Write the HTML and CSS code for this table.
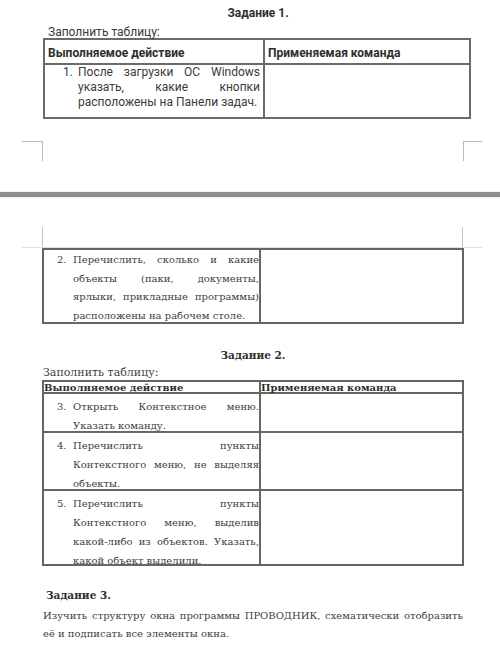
FILE: index.html
```html
<!DOCTYPE html>
<html lang="ru">
<head>
<meta charset="utf-8">
<title>Задания</title>
<link rel="stylesheet" href="styles.css">
</head>
<body>
<section class="sheet top">
  <h2 class="t1-title">Задание 1.</h2>
  <p class="t1-label">Заполнить таблицу:</p>
  <div class="g1">
    <div class="cell head c-l">Выполняемое действие</div>
    <div class="cell head">Применяемая команда</div>
    <div class="cell c-l body1">
      <div class="item item1">
        <span class="num">1.</span>
        <div class="text">
          <span class="ln j">После загрузки ОС Windows</span>
          <span class="ln j">указать, какие кнопки</span>
          <span class="ln">расположены на Панели задач.</span>
        </div>
      </div>
    </div>
    <div class="cell"></div>
  </div>
  <div class="marks"><span class="mark mark-l"></span><span class="mark mark-r"></span></div>
</section>

<div class="divider"></div>

<section class="sheet bottom">
  <div class="marks2"><div class="marks2-in"></div></div>
  <div class="g2">
    <div class="cell c-l row2">
      <div class="item">
        <span class="num">2.</span>
        <div class="text">
          <span class="ln j">Перечислить, сколько и какие</span>
          <span class="ln j">объекты (паки, документы,</span>
          <span class="ln j">ярлыки, прикладные программы)</span>
          <span class="ln">расположены на рабочем столе.</span>
        </div>
      </div>
    </div>
    <div class="cell"></div>
  </div>

  <h2 class="t2-title">Задание 2.</h2>
  <p class="t2-label">Заполнить таблицу:</p>
  <div class="g3">
    <div class="cell c-l rb head3">Выполняемое действие</div>
    <div class="cell rb head3">Применяемая команда</div>

    <div class="cell c-l rb row">
      <div class="item">
        <span class="num">3.</span>
        <div class="text">
          <span class="ln j">Открыть Контекстное меню.</span>
          <span class="ln">Указать команду.</span>
        </div>
      </div>
    </div>
    <div class="cell rb"></div>

    <div class="cell c-l rb row">
      <div class="item">
        <span class="num">4.</span>
        <div class="text">
          <span class="ln j">Перечислить пункты</span>
          <span class="ln j">Контекстного меню, не выделяя</span>
          <span class="ln">объекты.</span>
        </div>
      </div>
    </div>
    <div class="cell rb"></div>

    <div class="cell c-l row">
      <div class="item">
        <span class="num">5.</span>
        <div class="text">
          <span class="ln j">Перечислить пункты</span>
          <span class="ln j">Контекстного меню, выделив</span>
          <span class="ln j">какой-либо из объектов. Указать,</span>
          <span class="ln">какой объект выделили.</span>
        </div>
      </div>
    </div>
    <div class="cell"></div>
  </div>

  <h2 class="t3-title">Задание 3.</h2>
  <p class="t3-text">
    <span class="ln j">Изучить структуру окна программы ПРОВОДНИК, схематически отобразить</span>
    <span class="ln">её и подписать все элементы окна.</span>
  </p>
</section>
</body>
</html>
```

FILE: styles.css
```css
html, body {
  margin: 0;
  padding: 0;
  background: #ffffff;
}

.sheet {
  display: block;
}

/* ---------- top page (sans) ---------- */
.top {
  padding-top: 5px;
  font-family: Roboto, "Liberation Sans", sans-serif;
  color: #3a3a3a;
}

.t1-title {
  margin: 0;
  padding-left: 16px;
  font-size: 12px;
  font-weight: 700;
  line-height: 16px;
  text-align: center;
  color: #2e2e2e;
}

.t1-label {
  margin: 5px 0 0 48px;
  font-size: 12px;
  line-height: 12px;
}

.g1 {
  box-sizing: border-box;
  margin-left: 43px;
  width: 428px;
  display: grid;
  grid-template-columns: 220px 1fr;
  grid-template-rows: 25px 52px;
  border: 2px solid #6b6b6b;
}

.cell {
  box-sizing: border-box;
  min-width: 0;
}

.c-l {
  border-right: 2px solid #6b6b6b;
}

.head {
  border-bottom: 2px solid #6b6b6b;
  padding: 6px 0 0 3px;
  font-size: 12px;
  font-weight: 700;
  line-height: 14px;
  color: #2e2e2e;
}

.body1 {
  font-size: 12px;
  line-height: 15px;
}

.item {
  display: flex;
}

.num {
  flex: none;
}

.item1 .num {
  margin-left: 18px;
  width: 15px;
}

.item1 .text {
  padding-right: 3px;
}

.text {
  flex: 1;
  min-width: 0;
}

.ln {
  display: block;
  white-space: nowrap;
}

.ln.j {
  text-align: justify;
  text-align-last: justify;
  white-space: normal;
}

.marks {
  display: flex;
  justify-content: space-between;
  margin: 22px 18px 0 22px;
}

.mark {
  display: block;
  height: 20px;
  box-sizing: border-box;
  border-top: 1px solid #b9b9b9;
}

.mark-l {
  width: 21px;
  border-right: 1px solid #b9b9b9;
}

.mark-r {
  width: 19px;
  border-left: 1px solid #b9b9b9;
}

.divider {
  margin-top: 31px;
  height: 5px;
  background: #8e8e8e;
  box-shadow: 0 0 1px #aaaaaa;
}

/* ---------- bottom page (serif) ---------- */
.bottom {
  font-family: "DejaVu Serif", "Liberation Serif", serif;
  font-size: 10px;
  color: #404040;
}

.marks2 {
  margin: 30px 18px 0 22px;
  height: 21px;
  box-sizing: border-box;
  padding: 0 19px 0 20px;
  border-bottom: 1px solid #e0e0e0;
}

.marks2-in {
  height: 100%;
  border-left: 1px solid #c4c4c4;
  border-right: 1px solid #c4c4c4;
}

.g2,
.g3 {
  box-sizing: border-box;
  margin-left: 42px;
  width: 422px;
  display: grid;
  grid-template-columns: 217px 1fr;
  border: 2px solid #666666;
}

.g2 {
  grid-template-rows: 72px;
}

.rb {
  border-bottom: 2px solid #666666;
}

.g2 .c-l,
.g3 .c-l {
  border-right-color: #666666;
}

.row2,
.row {
  line-height: 19px;
}

.row2 {
  padding-top: 1px;
  line-height: 18.5px;
}

.row {
  padding-top: 3px;
}

.row2 .num,
.row .num {
  margin-left: 13px;
  width: 16px;
}

.t2-title {
  margin: 23px 0 0;
  padding-left: 6px;
  font-size: 10.5px;
  font-weight: 700;
  line-height: 16px;
  text-align: center;
  color: #2e2e2e;
}

.t2-label {
  margin: 3px 0 0 43px;
  font-size: 11px;
  line-height: 14px;
}

.g3 {
  grid-template-rows: 12px 39px 58px 73px;
}

.head3 {
  font-size: 10px;
  font-weight: 700;
  line-height: 10px;
  color: #2e2e2e;
  padding-top: 1px;
}

.t3-title {
  margin: 21px 0 0 46px;
  font-size: 10.5px;
  font-weight: 700;
  line-height: 16px;
  color: #2e2e2e;
}

.t3-text {
  margin: 4px 37px 0 43px;
  line-height: 17.5px;
}
```
